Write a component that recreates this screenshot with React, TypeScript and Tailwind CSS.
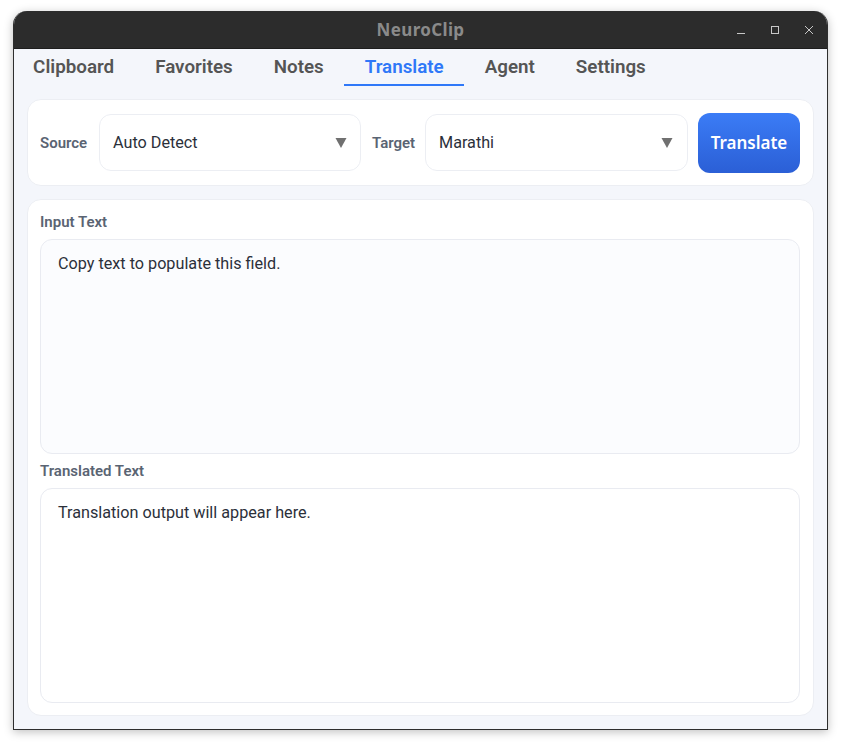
export default function App() {
  const tabs = ["Clipboard", "Favorites", "Notes", "Translate", "Agent", "Settings"];
  const roboto = "font-['Roboto',sans-serif]";
  return (
    <div className={`w-[841px] h-[746px] bg-white pt-[11px] pl-[13px] ${roboto}`}>
      <div className="w-[815px] h-[719px] flex flex-col rounded-t-[14px] border-x border-b border-[#2e2e2e] bg-[#f4f6fb] shadow-[0_2px_10px_rgba(0,0,0,0.25)] overflow-hidden">
        <div className="relative h-[38px] shrink-0 bg-[#2c2c2c] flex items-center justify-center border-b border-[#1e1e1e] -mx-px">
          <span className="font-['Noto_Sans',sans-serif] font-bold text-[17px] text-[#8a8a8a] tracking-[0.35px]">NeuroClip</span>
          <div className="absolute right-0 top-0 h-full flex items-center text-[#c8c8c8]">
            <div className="w-[34px] flex justify-center">
              <svg width="10" height="10" viewBox="0 0 10 10"><path d="M1 8.5h8" stroke="currentColor" strokeWidth="1" /></svg>
            </div>
            <div className="w-[34px] flex justify-center">
              <svg width="10" height="10" viewBox="0 0 10 10"><rect x="1.5" y="1.5" width="7" height="7" fill="none" stroke="currentColor" strokeWidth="1" /></svg>
            </div>
            <div className="w-[34px] flex justify-center mr-[2px]">
              <svg width="10" height="10" viewBox="0 0 10 10"><path d="M1 1l8 8M9 1l-8 8" stroke="currentColor" strokeWidth="1" /></svg>
            </div>
          </div>
        </div>
        <div className="flex h-[37px] shrink-0 -ml-[1.4px]">
          {tabs.map((t) => (
            <div
              key={t}
              className={`px-[20.5px] h-[37px] pt-[4px] border-b-2 text-[18.8px] font-semibold leading-[28px] ${t === "Translate" ? "text-[#2f78f8] border-[#2f78f8]" : "text-[#555555] border-transparent"}`}
            >
              {t}
            </div>
          ))}
        </div>
        <div className="flex-1 flex flex-col gap-[13px] py-[13px] px-[13px]">
          <div className="h-[87px] shrink-0 rounded-[14px] bg-white border border-[#eceef3] flex items-center pl-[12px] pr-[13px]">
            <span className="text-[15px] font-semibold text-[#5a6473] w-[59px] pt-[2px]">Source</span>
            <div className="w-[262px] h-[57px] rounded-[12px] border border-[#eceef3] bg-white flex items-center justify-between pl-[13px] pr-[13px] text-[16.2px] text-[#2b303a]">
              <span className="pt-[2px]">Auto Detect</span>
              <svg width="12" height="10" viewBox="0 0 12 10"><path d="M0.5 0h11L6 10z" fill="#707070" /></svg>
            </div>
            <span className="text-[15px] font-semibold text-[#5a6473] ml-[11px] w-[53px] pt-[2px]">Target</span>
            <div className="w-[263px] h-[57px] rounded-[12px] border border-[#eceef3] bg-white flex items-center justify-between pl-[13px] pr-[14px] text-[16.2px] text-[#2b303a]">
              <span className="pt-[2px]">Marathi</span>
              <svg width="12" height="10" viewBox="0 0 12 10"><path d="M0.5 0h11L6 10z" fill="#707070" /></svg>
            </div>
            <div className="ml-[10px] w-[102px] h-[60px] rounded-[12px] bg-gradient-to-b from-[#3b7cf6] to-[#2b5fd6] flex items-center justify-center text-white font-['Noto_Sans',sans-serif] font-semibold text-[17px]">
              Translate
            </div>
          </div>
          <div className="flex-1 rounded-[14px] bg-white border border-[#eceef3] pl-[12px] pr-[13px] flex flex-col">
            <div className="h-[39px] shrink-0 pt-[12px] text-[15px] leading-[20px] font-semibold text-[#5a6473]">Input Text</div>
            <div className="h-[215px] shrink-0 rounded-[12px] border border-[#e9ebf1] bg-[#fbfcfe] px-[17px] pt-[13px] text-[16.2px] leading-[22px] text-[#2b303a]">
              Copy text to populate this field.
            </div>
            <div className="h-[34px] shrink-0 pt-[7px] text-[15px] leading-[20px] font-semibold text-[#5a6473]">Translated Text</div>
            <div className="h-[215px] shrink-0 rounded-[12px] border border-[#e9ebf1] bg-white px-[17px] pt-[13px] text-[16.2px] leading-[22px] text-[#2b303a]">
              Translation output will appear here.
            </div>
          </div>
        </div>
      </div>
    </div>
  );
}
